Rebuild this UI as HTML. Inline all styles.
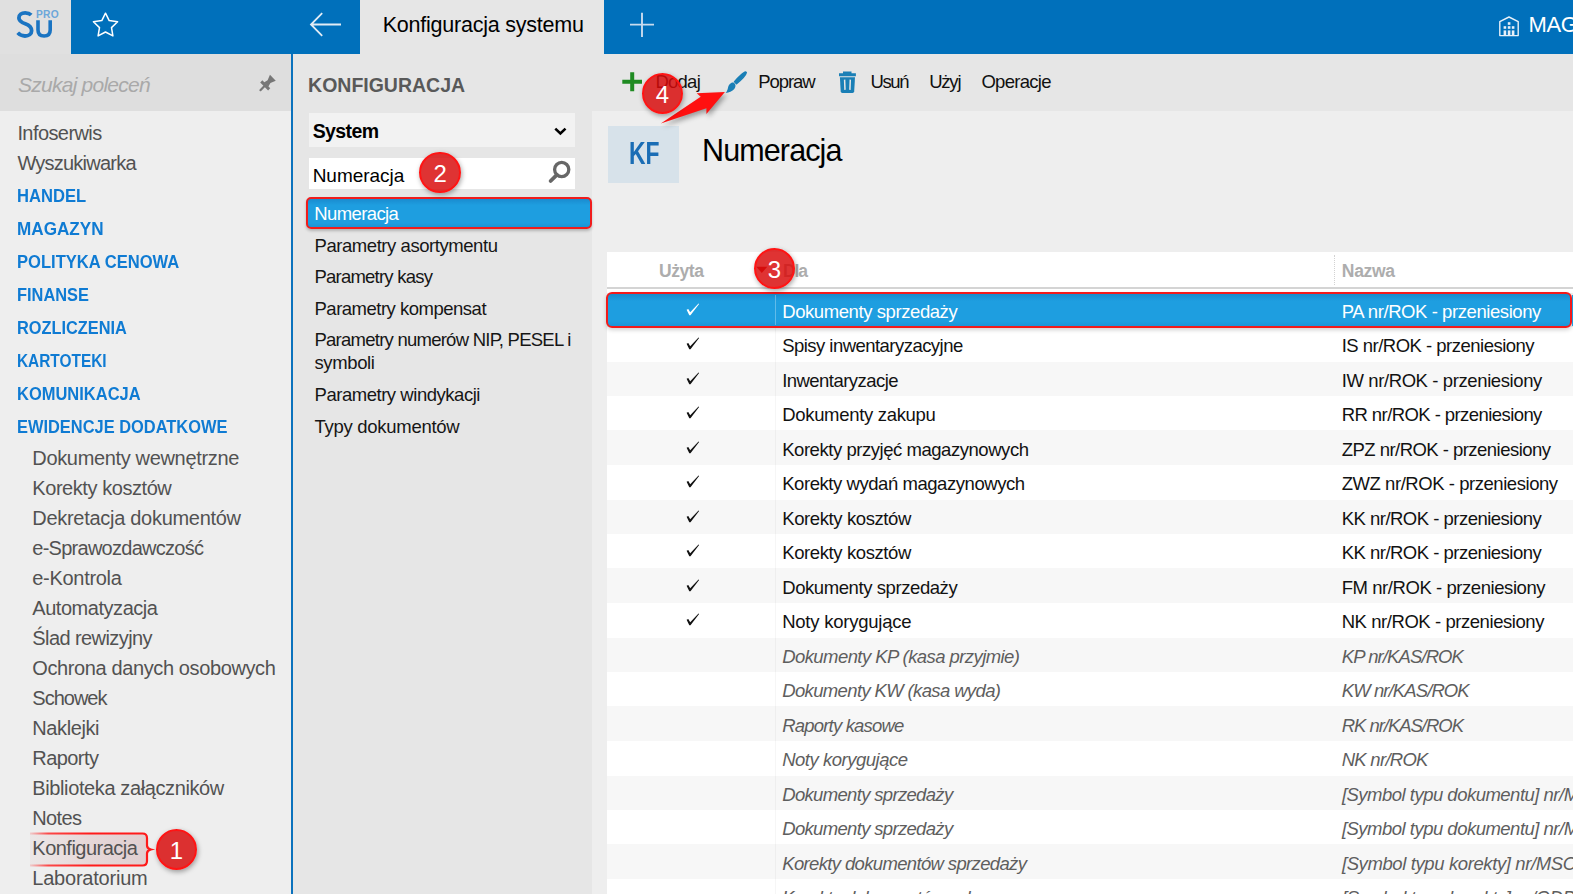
<!DOCTYPE html>
<html><head><meta charset="utf-8"><title>Konfiguracja systemu</title><style>
*{margin:0;padding:0;box-sizing:border-box}
html,body{width:1573px;height:894px;overflow:hidden;background:#eeeeee;font-family:"Liberation Sans", sans-serif}
.t{position:absolute;white-space:nowrap;line-height:1;font-family:"Liberation Sans", sans-serif}
.r{position:absolute}
.badge{position:absolute;width:41.5px;height:41.5px;border-radius:50%;background:rgba(216,10,10,0.83);border:2px solid #ff1414;box-shadow:1px 2px 5px rgba(0,0,0,0.35)}
.badge span{position:absolute;left:0;right:0;top:8.2px;text-align:center;color:#fff;font-family:"Liberation Sans", sans-serif;font-size:24px;line-height:1}
</style></head>
<body>
<div class="r" style="left:0px;top:0px;width:1573px;height:894px;background:#eeeeee;"></div>
<div class="r" style="left:0px;top:0px;width:71px;height:54px;background:#e0e0e0;"></div>
<div class="r" style="left:71px;top:0px;width:289px;height:54px;background:#0070bb;"></div>
<div class="r" style="left:360px;top:0px;width:244px;height:54px;background:#e6e6e6;"></div>
<div class="r" style="left:604px;top:0px;width:969px;height:54px;background:#0070bb;"></div>
<div class="r" style="left:0px;top:54px;width:291px;height:57px;background:#dedede;"></div>
<div class="r" style="left:0px;top:111px;width:291px;height:783px;background:#eeeeee;"></div>
<div class="r" style="left:291px;top:54px;width:2px;height:840px;background:#0b72bd;"></div>
<div class="r" style="left:293px;top:54px;width:1280px;height:57px;background:#e6e6e6;"></div>
<div class="r" style="left:293px;top:111px;width:299px;height:783px;background:#e6e6e6;"></div>
<svg class="r" style="left:0;top:0" width="71" height="54" viewBox="0 0 71 54">
<path d="M31.2 15 C29.6 13.4 27.6 12.9 25.2 12.9 C21.4 12.9 18.9 15 18.9 17.9 C18.9 21 21.6 22.4 25.3 23.8 C29.3 25.3 31.6 27.3 31.6 30.7 C31.6 34 28.8 36 25 36 C22 36 19.6 34.8 17.7 32.8" fill="none" stroke="#1a74c2" stroke-width="3.8" stroke-linecap="butt"/>
<path d="M38 20.2 V30 C38 33.8 40.3 36 44.1 36 C47.9 36 50.2 33.8 50.2 30 V20.2" fill="none" stroke="#1a74c2" stroke-width="3.6"/>
<text x="36" y="18" font-family="Liberation Sans" font-weight="bold" font-size="10.2" letter-spacing="0.3" fill="#6ca7da">PRO</text>
</svg>
<svg class="r" style="left:90px;top:10px" width="32" height="30" viewBox="0 0 32 30">
<path d="M15.5 3.2 L19.2 10.6 L27.6 11.8 L21.5 17.6 L22.9 25.9 L15.5 22 L8.1 25.9 L9.5 17.6 L3.4 11.8 L11.8 10.6 Z" fill="none" stroke="#fff" stroke-width="1.5" stroke-linejoin="round"/>
</svg>
<svg class="r" style="left:305px;top:8px" width="40" height="34" viewBox="0 0 40 34">
<path d="M36 16.5 H6 M17.2 5.2 L6 16.5 L17.2 27.8" fill="none" stroke="#e2ecf5" stroke-width="1.8"/>
</svg>
<div class="t" style="left:382.70px;top:14.80px;font-size:21.5px;color:#000;font-weight:normal;font-style:normal;letter-spacing:-0.224px;">Konfiguracja systemu</div>
<svg class="r" style="left:626px;top:8px" width="32" height="34" viewBox="0 0 32 34">
<path d="M16 4.7 V29 M4 16.6 H28" fill="none" stroke="#c8dbee" stroke-width="1.9"/>
</svg>
<svg class="r" style="left:1496px;top:14px" width="26" height="26" viewBox="0 0 26 26">
<path d="M3.8 7.6 L13 3 L22.2 7.6 V21.6 H3.8 Z" fill="none" stroke="#e8f0f8" stroke-width="1.4" stroke-linejoin="round"/>
<g fill="#e8f0f8"><rect x="11.8" y="8.2" width="2.6" height="2.6"/>
<rect x="7.6" y="12.2" width="2.6" height="2.6"/><rect x="11.8" y="12.2" width="2.6" height="2.6"/><rect x="15.8" y="12.2" width="2.6" height="2.6"/>
<rect x="7.6" y="16.4" width="2.6" height="4.6"/><rect x="11.8" y="16.4" width="2.6" height="4.6"/><rect x="15.8" y="16.4" width="2.6" height="4.6"/></g>
</svg>
<div class="t" style="left:1528.50px;top:13.98px;font-size:22px;color:#ffffff;font-weight:normal;font-style:normal;letter-spacing:-0.4px;">MAG</div>
<div class="t" style="left:18.10px;top:73.92px;font-size:21px;color:#a9a9a9;font-weight:normal;font-style:italic;letter-spacing:-0.765px;">Szukaj poleceń</div>
<svg class="r" style="left:250px;top:68px" width="35" height="32" viewBox="0 0 35 32">
<g transform="translate(9.7,22.9) rotate(45)" fill="#777777">
<rect x="-1.1" y="-8.5" width="2.2" height="8.5" rx="1"/>
<path d="M-5.6 -6.3 H5.6 V-9.3 H-5.6 Z"/>
<path d="M-3 -9 L-2 -13.2 L-4.1 -18.6 H4.1 L2 -13.2 L3 -9 Z"/>
</g></svg>
<div class="t" style="left:17.40px;top:122.97px;font-size:20px;color:#525252;font-weight:normal;font-style:normal;letter-spacing:-0.583px;">Infoserwis</div>
<div class="t" style="left:17.40px;top:153.37px;font-size:20px;color:#525252;font-weight:normal;font-style:normal;letter-spacing:-0.768px;">Wyszukiwarka</div>
<div class="t" style="left:17.40px;top:187.14px;font-size:18.5px;color:#0f7bd3;font-weight:bold;font-style:normal;letter-spacing:0px;transform:scaleX(0.8962);transform-origin:0 0;">HANDEL</div>
<div class="t" style="left:17.40px;top:220.17px;font-size:18.5px;color:#0f7bd3;font-weight:bold;font-style:normal;letter-spacing:0px;transform:scaleX(0.9262);transform-origin:0 0;">MAGAZYN</div>
<div class="t" style="left:17.40px;top:253.20px;font-size:18.5px;color:#0f7bd3;font-weight:bold;font-style:normal;letter-spacing:0px;transform:scaleX(0.8954);transform-origin:0 0;">POLITYKA CENOWA</div>
<div class="t" style="left:17.40px;top:286.23px;font-size:18.5px;color:#0f7bd3;font-weight:bold;font-style:normal;letter-spacing:0px;transform:scaleX(0.8855);transform-origin:0 0;">FINANSE</div>
<div class="t" style="left:17.40px;top:319.26px;font-size:18.5px;color:#0f7bd3;font-weight:bold;font-style:normal;letter-spacing:0px;transform:scaleX(0.8838);transform-origin:0 0;">ROZLICZENIA</div>
<div class="t" style="left:17.40px;top:352.29px;font-size:18.5px;color:#0f7bd3;font-weight:bold;font-style:normal;letter-spacing:0px;transform:scaleX(0.8327);transform-origin:0 0;">KARTOTEKI</div>
<div class="t" style="left:17.40px;top:385.32px;font-size:18.5px;color:#0f7bd3;font-weight:bold;font-style:normal;letter-spacing:0px;transform:scaleX(0.8908);transform-origin:0 0;">KOMUNIKACJA</div>
<div class="t" style="left:17.40px;top:418.35px;font-size:18.5px;color:#0f7bd3;font-weight:bold;font-style:normal;letter-spacing:0px;transform:scaleX(0.8874);transform-origin:0 0;">EWIDENCJE DODATKOWE</div>
<div class="t" style="left:32.30px;top:448.37px;font-size:20px;color:#525252;font-weight:normal;font-style:normal;letter-spacing:-0.339px;">Dokumenty wewnętrzne</div>
<div class="t" style="left:32.30px;top:478.31px;font-size:20px;color:#525252;font-weight:normal;font-style:normal;letter-spacing:-0.439px;">Korekty kosztów</div>
<div class="t" style="left:32.30px;top:508.25px;font-size:20px;color:#525252;font-weight:normal;font-style:normal;letter-spacing:-0.29px;">Dekretacja dokumentów</div>
<div class="t" style="left:32.30px;top:538.19px;font-size:20px;color:#525252;font-weight:normal;font-style:normal;letter-spacing:-0.738px;">e-Sprawozdawczość</div>
<div class="t" style="left:32.30px;top:568.13px;font-size:20px;color:#525252;font-weight:normal;font-style:normal;letter-spacing:-0.3px;">e-Kontrola</div>
<div class="t" style="left:32.30px;top:598.07px;font-size:20px;color:#525252;font-weight:normal;font-style:normal;letter-spacing:-0.458px;">Automatyzacja</div>
<div class="t" style="left:32.30px;top:628.01px;font-size:20px;color:#525252;font-weight:normal;font-style:normal;letter-spacing:-0.581px;">Ślad rewizyjny</div>
<div class="t" style="left:32.30px;top:657.95px;font-size:20px;color:#525252;font-weight:normal;font-style:normal;letter-spacing:-0.383px;">Ochrona danych osobowych</div>
<div class="t" style="left:32.30px;top:687.89px;font-size:20px;color:#525252;font-weight:normal;font-style:normal;letter-spacing:-1.0px;">Schowek</div>
<div class="t" style="left:32.30px;top:717.83px;font-size:20px;color:#525252;font-weight:normal;font-style:normal;letter-spacing:-0.4px;">Naklejki</div>
<div class="t" style="left:32.30px;top:747.77px;font-size:20px;color:#525252;font-weight:normal;font-style:normal;letter-spacing:-0.575px;">Raporty</div>
<div class="t" style="left:32.30px;top:777.71px;font-size:20px;color:#525252;font-weight:normal;font-style:normal;letter-spacing:-0.388px;">Biblioteka załączników</div>
<div class="t" style="left:32.30px;top:807.65px;font-size:20px;color:#525252;font-weight:normal;font-style:normal;letter-spacing:-0.637px;">Notes</div>
<svg class="r" style="left:28px;top:830px" width="128" height="40" viewBox="0 0 128 40">
<defs><linearGradient id="kg" x1="0" x2="1"><stop offset="0" stop-color="#ff2020" stop-opacity="0.15"/><stop offset="0.15" stop-color="#ff2020" stop-opacity="0.8"/><stop offset="0.5" stop-color="#ff1a1a"/></linearGradient>
<linearGradient id="kf" x1="0" x2="1"><stop offset="0" stop-color="#e8dcdc" stop-opacity="0.4"/><stop offset="0.5" stop-color="#e6d7d8"/><stop offset="1" stop-color="#e0cfd0"/></linearGradient></defs>
<path d="M2 3.5 H114.5 Q119 3.5 119 8 V15.5 Q119 18.5 122.8 19.5 Q119 20.5 119 23.5 V31 Q119 35.5 114.5 35.5 H2 Z" fill="url(#kf)"/>
<path d="M2 3.5 H114.5 Q119 3.5 119 8 V15.5 Q119 18.5 122.8 19.5 Q119 20.5 119 23.5 V31 Q119 35.5 114.5 35.5 H2" fill="none" stroke="url(#kg)" stroke-width="2.2"/>
</svg>
<div class="t" style="left:32.30px;top:837.59px;font-size:20px;color:#525252;font-weight:normal;font-style:normal;letter-spacing:-0.509px;">Konfiguracja</div>
<div class="t" style="left:32.30px;top:867.53px;font-size:20px;color:#525252;font-weight:normal;font-style:normal;letter-spacing:-0.223px;">Laboratorium</div>
<div class="t" style="left:308.10px;top:75.89px;font-size:19.5px;color:#595959;font-weight:bold;font-style:normal;letter-spacing:-0.009px;">KONFIGURACJA</div>
<div class="r" style="left:309px;top:112.5px;width:265.5px;height:34.5px;background:#f2f2f2;"></div>
<div class="t" style="left:312.70px;top:121.89px;font-size:19.5px;color:#000;font-weight:bold;font-style:normal;letter-spacing:-0.61px;">System</div>
<svg class="r" style="left:552px;top:125px" width="16" height="12" viewBox="0 0 16 12">
<path d="M3.3 3.6 L8.4 8.4 L13.5 3.6" fill="none" stroke="#000" stroke-width="2.6"/>
</svg>
<div class="r" style="left:309px;top:157.5px;width:265.5px;height:31.5px;background:#ffffff;"></div>
<div class="t" style="left:312.70px;top:165.62px;font-size:19px;color:#000;font-weight:normal;font-style:normal;letter-spacing:-0.038px;">Numeracja</div>
<svg class="r" style="left:545px;top:158px" width="28" height="28" viewBox="0 0 28 28">
<circle cx="16.7" cy="11.5" r="7.1" fill="none" stroke="#676767" stroke-width="3.3"/>
<path d="M11.8 16.8 L5.6 23" stroke="#676767" stroke-width="3.8" stroke-linecap="round"/>
</svg>
<div class="r" style="left:305.5px;top:196.8px;width:286.5px;height:32px;background:linear-gradient(#1a8bcf,#1e9ee0 22%,#1e9ee0 85%,#1b93d5);border:2px solid #f01c1c;border-radius:5px;box-shadow:0 2px 3px rgba(0,0,0,0.22)"></div>
<div class="t" style="left:314.20px;top:205.34px;font-size:18.5px;color:#ffffff;font-weight:normal;font-style:normal;letter-spacing:-0.594px;">Numeracja</div>
<div class="t" style="left:314.50px;top:236.54px;font-size:18.5px;color:#161616;font-weight:normal;font-style:normal;letter-spacing:-0.442px;">Parametry asortymentu</div>
<div class="t" style="left:314.50px;top:267.54px;font-size:18.5px;color:#161616;font-weight:normal;font-style:normal;letter-spacing:-0.777px;">Parametry kasy</div>
<div class="t" style="left:314.50px;top:299.64px;font-size:18.5px;color:#161616;font-weight:normal;font-style:normal;letter-spacing:-0.497px;">Parametry kompensat</div>
<div class="t" style="left:314.50px;top:330.54px;font-size:18.5px;color:#161616;font-weight:normal;font-style:normal;letter-spacing:-0.753px;">Parametry numerów NIP, PESEL i</div>
<div class="t" style="left:314.50px;top:354.24px;font-size:18.5px;color:#161616;font-weight:normal;font-style:normal;letter-spacing:-0.383px;">symboli</div>
<div class="t" style="left:314.50px;top:386.44px;font-size:18.5px;color:#161616;font-weight:normal;font-style:normal;letter-spacing:-0.463px;">Parametry windykacji</div>
<div class="t" style="left:314.50px;top:417.54px;font-size:18.5px;color:#161616;font-weight:normal;font-style:normal;letter-spacing:-0.279px;">Typy dokumentów</div>
<svg class="r" style="left:620px;top:70px" width="24" height="24" viewBox="0 0 24 24">
<path d="M12.2 2.2 V21.2 M2.3 11.7 H22" stroke="#1f8b22" stroke-width="4"/>
</svg>
<div class="t" style="left:655.40px;top:73.14px;font-size:18.5px;color:#111;font-weight:normal;font-style:normal;letter-spacing:-0.738px;">Dodaj</div>
<svg class="r" style="left:720px;top:66px" width="30" height="30" viewBox="0 0 30 30">
<path d="M26.2 6.6 C25.8 8.6 21.5 13.5 16.5 17.6 L14.6 15.7 C18.2 11.2 23.8 6.2 25.6 6 Z" fill="#1a7fb6" stroke="#1a7fb6" stroke-width="1.6" stroke-linejoin="round"/>
<path d="M14.2 17 C15.9 18.6 16 20.8 14.3 23 C12.4 25.3 8.8 26.6 5.6 27 C7.2 25.4 7.6 23.6 8.1 21.3 C8.7 18.6 11.8 15.3 14.2 17 Z" fill="#1a7fb6"/>
</svg>
<div class="t" style="left:758.30px;top:73.14px;font-size:18.5px;color:#111;font-weight:normal;font-style:normal;letter-spacing:-1.08px;">Popraw</div>
<svg class="r" style="left:836px;top:68px" width="22" height="27" viewBox="0 0 22 27">
<path d="M7 3.5 H15.5 V5.2 H19.9 V8.3 H3 V5.2 H7 Z" fill="#1a7fb6"/>
<path d="M3.9 9.2 H19 L18.2 23.6 Q18 25 16.6 25 H6.3 Q4.9 25 4.7 23.6 Z" fill="#1a7fb6"/>
<path d="M8.6 11.6 L9 21.9 M14.3 11.6 L13.9 21.9" stroke="#e6e6e6" stroke-width="1.5"/>
</svg>
<div class="t" style="left:870.40px;top:73.14px;font-size:18.5px;color:#111;font-weight:normal;font-style:normal;letter-spacing:-1.333px;">Usuń</div>
<div class="t" style="left:929.20px;top:73.14px;font-size:18.5px;color:#111;font-weight:normal;font-style:normal;letter-spacing:-1.217px;">Użyj</div>
<div class="t" style="left:981.40px;top:73.14px;font-size:18.5px;color:#111;font-weight:normal;font-style:normal;letter-spacing:-0.707px;">Operacje</div>
<div class="r" style="left:608px;top:126px;width:71px;height:57px;background:#d7e2ea;"></div>
<div class="t" style="left:629.30px;top:138.38px;font-size:30.5px;color:#1a6db5;font-weight:bold;font-style:normal;letter-spacing:0px;transform:scaleX(0.7503);transform-origin:0 0;">KF</div>
<div class="t" style="left:702.00px;top:135.48px;font-size:30.5px;color:#000;font-weight:normal;font-style:normal;letter-spacing:-0.875px;">Numeracja</div>
<div class="r" style="left:607px;top:252px;width:966px;height:35px;background:#ffffff;"></div>
<div class="r" style="left:607px;top:286.6px;width:966px;height:2px;background:#d4d4d4;"></div>
<div class="r" style="left:607px;top:288.6px;width:966px;height:4px;background:#ffffff;"></div>
<div class="t" style="left:659.00px;top:263.09px;font-size:17.5px;color:#adadad;font-weight:bold;font-style:normal;letter-spacing:-0.45px;">Użyta</div>
<svg class="r" style="left:755px;top:265px" width="14" height="9" viewBox="0 0 14 9"><path d="M1.3 1.8 H12.3 L6.8 7.9 Z" fill="#c21a1a"/></svg>
<div class="t" style="left:783.00px;top:263.09px;font-size:17.5px;color:#adadad;font-weight:bold;font-style:normal;letter-spacing:-1.175px;">Dla</div>
<div class="r" style="left:1334px;top:255px;width:0;height:30px;border-left:1px dotted #d2d2d2"></div>
<div class="t" style="left:1341.80px;top:263.09px;font-size:17.5px;color:#adadad;font-weight:bold;font-style:normal;letter-spacing:-0.3px;">Nazwa</div>
<div class="r" style="left:607px;top:327px;width:966px;height:35px;background:#ffffff;"></div>
<div class="r" style="left:775px;top:327px;width:1px;height:35px;background:rgba(0,0,0,0.035);"></div>
<div class="r" style="left:607px;top:362px;width:966px;height:34px;background:#f7f7f7;"></div>
<div class="r" style="left:775px;top:362px;width:1px;height:34px;background:rgba(0,0,0,0.035);"></div>
<div class="r" style="left:607px;top:396px;width:966px;height:34px;background:#ffffff;"></div>
<div class="r" style="left:775px;top:396px;width:1px;height:34px;background:rgba(0,0,0,0.035);"></div>
<div class="r" style="left:607px;top:430px;width:966px;height:35px;background:#f7f7f7;"></div>
<div class="r" style="left:775px;top:430px;width:1px;height:35px;background:rgba(0,0,0,0.035);"></div>
<div class="r" style="left:607px;top:465px;width:966px;height:35px;background:#ffffff;"></div>
<div class="r" style="left:775px;top:465px;width:1px;height:35px;background:rgba(0,0,0,0.035);"></div>
<div class="r" style="left:607px;top:500px;width:966px;height:34px;background:#f7f7f7;"></div>
<div class="r" style="left:775px;top:500px;width:1px;height:34px;background:rgba(0,0,0,0.035);"></div>
<div class="r" style="left:607px;top:534px;width:966px;height:34px;background:#ffffff;"></div>
<div class="r" style="left:775px;top:534px;width:1px;height:34px;background:rgba(0,0,0,0.035);"></div>
<div class="r" style="left:607px;top:568px;width:966px;height:35px;background:#f7f7f7;"></div>
<div class="r" style="left:775px;top:568px;width:1px;height:35px;background:rgba(0,0,0,0.035);"></div>
<div class="r" style="left:607px;top:603px;width:966px;height:35px;background:#ffffff;"></div>
<div class="r" style="left:775px;top:603px;width:1px;height:35px;background:rgba(0,0,0,0.035);"></div>
<div class="r" style="left:607px;top:638px;width:966px;height:34px;background:#f7f7f7;"></div>
<div class="r" style="left:775px;top:638px;width:1px;height:34px;background:rgba(0,0,0,0.035);"></div>
<div class="r" style="left:607px;top:672px;width:966px;height:34px;background:#ffffff;"></div>
<div class="r" style="left:775px;top:672px;width:1px;height:34px;background:rgba(0,0,0,0.035);"></div>
<div class="r" style="left:607px;top:706px;width:966px;height:35px;background:#f7f7f7;"></div>
<div class="r" style="left:775px;top:706px;width:1px;height:35px;background:rgba(0,0,0,0.035);"></div>
<div class="r" style="left:607px;top:741px;width:966px;height:35px;background:#ffffff;"></div>
<div class="r" style="left:775px;top:741px;width:1px;height:35px;background:rgba(0,0,0,0.035);"></div>
<div class="r" style="left:607px;top:776px;width:966px;height:34px;background:#f7f7f7;"></div>
<div class="r" style="left:775px;top:776px;width:1px;height:34px;background:rgba(0,0,0,0.035);"></div>
<div class="r" style="left:607px;top:810px;width:966px;height:34px;background:#ffffff;"></div>
<div class="r" style="left:775px;top:810px;width:1px;height:34px;background:rgba(0,0,0,0.035);"></div>
<div class="r" style="left:607px;top:844px;width:966px;height:35px;background:#f7f7f7;"></div>
<div class="r" style="left:775px;top:844px;width:1px;height:35px;background:rgba(0,0,0,0.035);"></div>
<div class="r" style="left:607px;top:879px;width:966px;height:35px;background:#ffffff;"></div>
<div class="r" style="left:775px;top:879px;width:1px;height:35px;background:rgba(0,0,0,0.035);"></div>
<div class="r" style="left:605.6px;top:292.4px;width:966px;height:35.3px;background:linear-gradient(#178acb,#1e9ee0 22%,#1e9ee0 85%,#1b95d8);border:2.3px solid #f21a1a;border-radius:6px;box-shadow:0 2px 4px rgba(0,0,0,0.18)"></div>
<div class="r" style="left:775px;top:295px;width:1px;height:30px;background:rgba(255,255,255,0.3);"></div>
<div class="r" style="left:1571.5px;top:294.5px;width:2px;height:31px;background:#1e9ee0;"></div>
<svg class="r" style="left:684px;top:300.50px" width="18" height="18" viewBox="0 0 18 18"><path d="M2.6 8.7 L4.3 7.9 L6.2 11.3 L14.5 2.4 L15.1 2.9 L6.5 14.3 L5.3 14.3 Z" fill="#ffffff"/></svg>
<div class="t" style="left:782.20px;top:302.84px;font-size:18.5px;color:#ffffff;font-weight:normal;font-style:normal;letter-spacing:-0.417px;">Dokumenty sprzedaży</div>
<div class="t" style="left:1341.70px;top:302.84px;font-size:18.5px;color:#ffffff;font-weight:normal;font-style:normal;letter-spacing:-0.426px;">PA nr/ROK - przeniesiony</div>
<svg class="r" style="left:684px;top:335.00px" width="18" height="18" viewBox="0 0 18 18"><path d="M2.6 8.7 L4.3 7.9 L6.2 11.3 L14.5 2.4 L15.1 2.9 L6.5 14.3 L5.3 14.3 Z" fill="#121212"/></svg>
<div class="t" style="left:782.20px;top:337.34px;font-size:18.5px;color:#121212;font-weight:normal;font-style:normal;letter-spacing:-0.538px;">Spisy inwentaryzacyjne</div>
<div class="t" style="left:1341.70px;top:337.34px;font-size:18.5px;color:#121212;font-weight:normal;font-style:normal;letter-spacing:-0.509px;">IS nr/ROK - przeniesiony</div>
<svg class="r" style="left:684px;top:369.50px" width="18" height="18" viewBox="0 0 18 18"><path d="M2.6 8.7 L4.3 7.9 L6.2 11.3 L14.5 2.4 L15.1 2.9 L6.5 14.3 L5.3 14.3 Z" fill="#121212"/></svg>
<div class="t" style="left:782.20px;top:371.84px;font-size:18.5px;color:#121212;font-weight:normal;font-style:normal;letter-spacing:-0.538px;">Inwentaryzacje</div>
<div class="t" style="left:1341.70px;top:371.84px;font-size:18.5px;color:#121212;font-weight:normal;font-style:normal;letter-spacing:-0.393px;">IW nr/ROK - przeniesiony</div>
<svg class="r" style="left:684px;top:404.00px" width="18" height="18" viewBox="0 0 18 18"><path d="M2.6 8.7 L4.3 7.9 L6.2 11.3 L14.5 2.4 L15.1 2.9 L6.5 14.3 L5.3 14.3 Z" fill="#121212"/></svg>
<div class="t" style="left:782.20px;top:406.34px;font-size:18.5px;color:#121212;font-weight:normal;font-style:normal;letter-spacing:-0.317px;">Dokumenty zakupu</div>
<div class="t" style="left:1341.70px;top:406.34px;font-size:18.5px;color:#121212;font-weight:normal;font-style:normal;letter-spacing:-0.572px;">RR nr/ROK - przeniesiony</div>
<svg class="r" style="left:684px;top:438.50px" width="18" height="18" viewBox="0 0 18 18"><path d="M2.6 8.7 L4.3 7.9 L6.2 11.3 L14.5 2.4 L15.1 2.9 L6.5 14.3 L5.3 14.3 Z" fill="#121212"/></svg>
<div class="t" style="left:782.20px;top:440.84px;font-size:18.5px;color:#121212;font-weight:normal;font-style:normal;letter-spacing:-0.456px;">Korekty przyjęć magazynowych</div>
<div class="t" style="left:1341.70px;top:440.84px;font-size:18.5px;color:#121212;font-weight:normal;font-style:normal;letter-spacing:-0.531px;">ZPZ nr/ROK - przeniesiony</div>
<svg class="r" style="left:684px;top:473.00px" width="18" height="18" viewBox="0 0 18 18"><path d="M2.6 8.7 L4.3 7.9 L6.2 11.3 L14.5 2.4 L15.1 2.9 L6.5 14.3 L5.3 14.3 Z" fill="#121212"/></svg>
<div class="t" style="left:782.20px;top:475.34px;font-size:18.5px;color:#121212;font-weight:normal;font-style:normal;letter-spacing:-0.444px;">Korekty wydań magazynowych</div>
<div class="t" style="left:1341.70px;top:475.34px;font-size:18.5px;color:#121212;font-weight:normal;font-style:normal;letter-spacing:-0.45px;">ZWZ nr/ROK - przeniesiony</div>
<svg class="r" style="left:684px;top:507.50px" width="18" height="18" viewBox="0 0 18 18"><path d="M2.6 8.7 L4.3 7.9 L6.2 11.3 L14.5 2.4 L15.1 2.9 L6.5 14.3 L5.3 14.3 Z" fill="#121212"/></svg>
<div class="t" style="left:782.20px;top:509.84px;font-size:18.5px;color:#121212;font-weight:normal;font-style:normal;letter-spacing:-0.393px;">Korekty kosztów</div>
<div class="t" style="left:1341.70px;top:509.84px;font-size:18.5px;color:#121212;font-weight:normal;font-style:normal;letter-spacing:-0.513px;">KK nr/ROK - przeniesiony</div>
<svg class="r" style="left:684px;top:542.00px" width="18" height="18" viewBox="0 0 18 18"><path d="M2.6 8.7 L4.3 7.9 L6.2 11.3 L14.5 2.4 L15.1 2.9 L6.5 14.3 L5.3 14.3 Z" fill="#121212"/></svg>
<div class="t" style="left:782.20px;top:544.34px;font-size:18.5px;color:#121212;font-weight:normal;font-style:normal;letter-spacing:-0.393px;">Korekty kosztów</div>
<div class="t" style="left:1341.70px;top:544.34px;font-size:18.5px;color:#121212;font-weight:normal;font-style:normal;letter-spacing:-0.513px;">KK nr/ROK - przeniesiony</div>
<svg class="r" style="left:684px;top:576.50px" width="18" height="18" viewBox="0 0 18 18"><path d="M2.6 8.7 L4.3 7.9 L6.2 11.3 L14.5 2.4 L15.1 2.9 L6.5 14.3 L5.3 14.3 Z" fill="#121212"/></svg>
<div class="t" style="left:782.20px;top:578.84px;font-size:18.5px;color:#121212;font-weight:normal;font-style:normal;letter-spacing:-0.417px;">Dokumenty sprzedaży</div>
<div class="t" style="left:1341.70px;top:578.84px;font-size:18.5px;color:#121212;font-weight:normal;font-style:normal;letter-spacing:-0.433px;">FM nr/ROK - przeniesiony</div>
<svg class="r" style="left:684px;top:611.00px" width="18" height="18" viewBox="0 0 18 18"><path d="M2.6 8.7 L4.3 7.9 L6.2 11.3 L14.5 2.4 L15.1 2.9 L6.5 14.3 L5.3 14.3 Z" fill="#121212"/></svg>
<div class="t" style="left:782.20px;top:613.34px;font-size:18.5px;color:#121212;font-weight:normal;font-style:normal;letter-spacing:-0.239px;">Noty korygujące</div>
<div class="t" style="left:1341.70px;top:613.34px;font-size:18.5px;color:#121212;font-weight:normal;font-style:normal;letter-spacing:-0.439px;">NK nr/ROK - przeniesiony</div>
<div class="t" style="left:782.20px;top:647.84px;font-size:18.5px;color:#5e5e5e;font-weight:normal;font-style:italic;letter-spacing:-0.572px;">Dokumenty KP (kasa przyjmie)</div>
<div class="t" style="left:1341.70px;top:647.84px;font-size:18.5px;color:#5e5e5e;font-weight:normal;font-style:italic;letter-spacing:-0.892px;">KP nr/KAS/ROK</div>
<div class="t" style="left:782.20px;top:682.34px;font-size:18.5px;color:#5e5e5e;font-weight:normal;font-style:italic;letter-spacing:-0.635px;">Dokumenty KW (kasa wyda)</div>
<div class="t" style="left:1341.70px;top:682.34px;font-size:18.5px;color:#5e5e5e;font-weight:normal;font-style:italic;letter-spacing:-0.9px;">KW nr/KAS/ROK</div>
<div class="t" style="left:782.20px;top:716.84px;font-size:18.5px;color:#5e5e5e;font-weight:normal;font-style:italic;letter-spacing:-0.804px;">Raporty kasowe</div>
<div class="t" style="left:1341.70px;top:716.84px;font-size:18.5px;color:#5e5e5e;font-weight:normal;font-style:italic;letter-spacing:-1.033px;">RK nr/KAS/ROK</div>
<div class="t" style="left:782.20px;top:751.34px;font-size:18.5px;color:#5e5e5e;font-weight:normal;font-style:italic;letter-spacing:-0.482px;">Noty korygujące</div>
<div class="t" style="left:1341.70px;top:751.34px;font-size:18.5px;color:#5e5e5e;font-weight:normal;font-style:italic;letter-spacing:-0.719px;">NK nr/ROK</div>
<div class="t" style="left:782.20px;top:785.84px;font-size:18.5px;color:#5e5e5e;font-weight:normal;font-style:italic;letter-spacing:-0.669px;">Dokumenty sprzedaży</div>
<div class="t" style="left:1341.90px;top:785.84px;font-size:18.5px;color:#5e5e5e;font-weight:normal;font-style:italic;letter-spacing:-0.509px;">[Symbol typu dokumentu] nr/MSC/ROK</div>
<div class="t" style="left:782.20px;top:820.34px;font-size:18.5px;color:#5e5e5e;font-weight:normal;font-style:italic;letter-spacing:-0.669px;">Dokumenty sprzedaży</div>
<div class="t" style="left:1341.90px;top:820.34px;font-size:18.5px;color:#5e5e5e;font-weight:normal;font-style:italic;letter-spacing:-0.509px;">[Symbol typu dokumentu] nr/MSC/ROK</div>
<div class="t" style="left:782.20px;top:854.84px;font-size:18.5px;color:#5e5e5e;font-weight:normal;font-style:italic;letter-spacing:-0.646px;">Korekty dokumentów sprzedaży</div>
<div class="t" style="left:1341.90px;top:854.84px;font-size:18.5px;color:#5e5e5e;font-weight:normal;font-style:italic;letter-spacing:-0.39px;">[Symbol typu korekty] nr/MSC/ROK</div>
<div class="t" style="left:782.20px;top:889.34px;font-size:18.5px;color:#5e5e5e;font-weight:normal;font-style:italic;letter-spacing:-0.62px;">Korekty dokumentów zakupu</div>
<div class="t" style="left:1341.90px;top:889.34px;font-size:18.5px;color:#5e5e5e;font-weight:normal;font-style:italic;letter-spacing:-0.39px;">[Symbol typu korekty] nr/ODB/ROK</div>
<div class="badge" style="left:155.65px;top:828.75px"><span>1</span></div>
<div class="badge" style="left:419.45px;top:151.55px"><span>2</span></div>
<div class="badge" style="left:753.75px;top:247.85px"><span>3</span></div>
<svg class="r" style="left:650px;top:80px;filter:drop-shadow(2px 3px 2.5px rgba(0,0,0,0.35))" width="90" height="50" viewBox="0 0 90 50">
<path d="M10.8 43.4 L50.7 16.8 L46.7 13.2 L74.9 12.1 L56.4 34 L56.4 28.3 Z" fill="#ff1010"/>
</svg>
<div class="badge" style="left:641.75px;top:72.95px"><span>4</span></div>
</body></html>
